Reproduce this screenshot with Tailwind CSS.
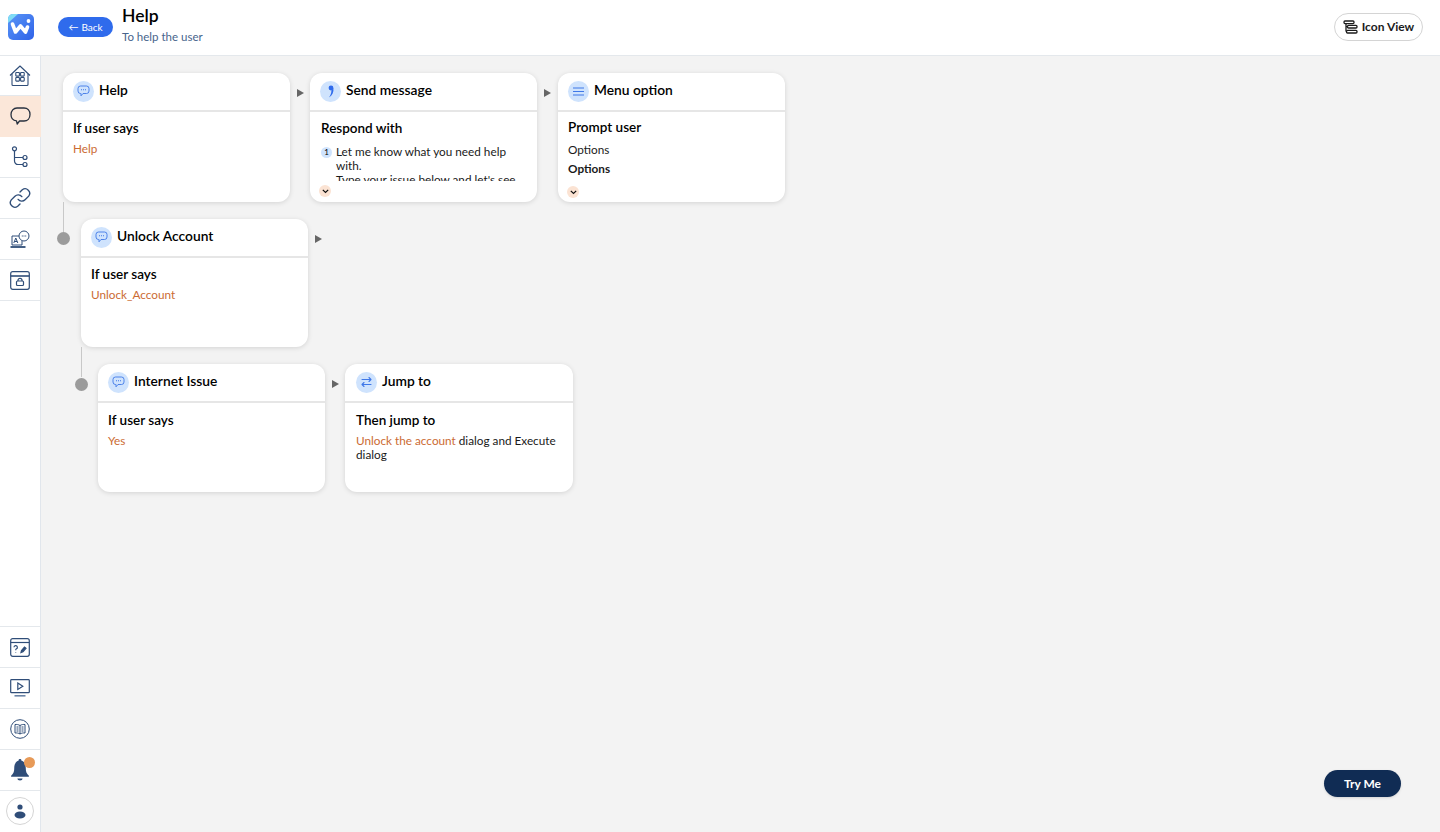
<!DOCTYPE html>
<html>
<head>
<meta charset="utf-8">
<script src="https://cdn.jsdelivr.net/npm/@tailwindcss/browser@4"></script>
</head>
<body class="font-['Lato',sans-serif] text-black bg-[#f3f3f3]">
<div class="relative w-[1440px] h-[832px] overflow-hidden flex flex-col">
  <header class="h-[56px] shrink-0 bg-white border-b border-[#e4e8ec] flex items-start">
    <div class="w-[41px] h-[55px] flex items-start justify-center pt-[14px] shrink-0">
      <svg width="26" height="26" viewBox="0 0 26 26"><defs><linearGradient id="lg" x1="0" y1="0" x2="1" y2="1"><stop offset="0" stop-color="#5a96f7"/><stop offset="1" stop-color="#2f62e8"/></linearGradient></defs><rect width="26" height="26" rx="5" fill="url(#lg)"/><path d="M0 9V5a5 5 0 0 1 5-5h5z" fill="#7fdcf5"/><path d="M4.500 10 7.500 18l5-6 5 6 2-5" fill="none" stroke="#fff" stroke-width="3.600" stroke-linecap="round" stroke-linejoin="round"/><circle cx="20.500" cy="7" r="1.900" fill="#fff"/></svg>
    </div>
    <button class="ml-[17px] mt-[17px] w-[55px] h-[20px] rounded-full bg-[#2f6bec] text-white text-[10px] flex items-center justify-center gap-[3px]"><span>←</span><span>Back</span></button>
    <div class="ml-[9px] mt-[6px]">
      <div class="text-[17.500px] leading-[20px] font-semibold">Help</div>
      <div class="text-[11.500px] leading-[14px] mt-[4px] text-[#47648c]">To help the user</div>
    </div>
    <button class="ml-auto mr-[17px] mt-[13px] w-[89px] h-[28px] rounded-full bg-white border border-[#d4d4d4] flex items-center justify-center gap-[4px] text-[12px] font-bold text-[#1b1b1b]">
      <svg width="15" height="14" viewBox="0 0 15 14" fill="none" stroke="#1b1b1b" stroke-width="1.300"><rect x="1" y="1" width="10" height="2.600" rx="1"/><path d="M3 3.600v3h1.500M3 6.600v5"/><rect x="4.500" y="5.400" width="9.500" height="2.600" rx="1"/><rect x="3.500" y="10.400" width="10.500" height="2.600" rx="1"/></svg>
      Icon View
    </button>
  </header>

  <div class="flex-1 flex min-h-0">
    <nav class="w-[41px] shrink-0 bg-white border-r border-[#e1e6ec] flex flex-col justify-between">
      <div class="flex flex-col">
        <div class="h-[40px] flex items-center justify-center border-b border-[#e4e8ec]">
          <svg width="22" height="22" viewBox="0 0 22 22" fill="none" stroke="#2f4d78" stroke-width="1.100" stroke-linejoin="round"><path d="M1 10.500 11 1l10 9.500"/><path d="M3 9v10.500a1 1 0 0 0 1 1h14a1 1 0 0 0 1-1V9"/><rect x="6.800" y="7.500" width="3.600" height="3.600" rx=".6"/><rect x="11.600" y="7.500" width="3.600" height="3.600" rx=".6"/><rect x="6.800" y="12.500" width="3.600" height="3.600" rx=".6"/><rect x="11.600" y="12.500" width="3.600" height="3.600" rx=".6"/></svg>
        </div>
        <div class="h-[41px] flex items-center justify-center bg-[#fbe7d9] -mr-px">
          <svg width="21" height="19" viewBox="0 0 21 19" fill="none" stroke="#27313f" stroke-width="1.300" stroke-linejoin="round"><path d="M7 1h7c3.500 0 6 2.500 6 6.500S17.500 14 14 14H9.500l-2.300 3-.7-3.200C3 13.500 1 11 1 7.500S3.500 1 7 1z"/></svg>
        </div>
        <div class="h-[41px] flex items-center justify-center border-b border-[#e4e8ec]">
          <svg width="18" height="22" viewBox="0 0 18 22" fill="none" stroke="#2f4d78" stroke-width="1.200"><circle cx="3.500" cy="2.800" r="2"/><circle cx="14" cy="11.500" r="2"/><circle cx="14" cy="18.500" r="2"/><path d="M3.500 4.800V15a3.500 3.500 0 0 0 3.500 3.500h5M3.500 11.500H12"/></svg>
        </div>
        <div class="h-[41px] flex items-center justify-center border-b border-[#e4e8ec]">
          <svg width="22" height="22" viewBox="0 0 24 24" fill="none" stroke="#2f4d78" stroke-width="1.500" stroke-linecap="round"><path d="M10 13.500a5 5 0 0 0 7.500.5l4-4a5 5 0 0 0-7-7l-2.500 2.500"/><path d="M14 10.500a5 5 0 0 0-7.500-.5l-4 4a5 5 0 0 0 7 7l2.500-2.500"/></svg>
        </div>
        <div class="h-[41px] flex items-center justify-center border-b border-[#e4e8ec]">
          <svg width="20" height="19" viewBox="0 0 20 19" fill="none" stroke="#2f4d78" stroke-width="1"><path d="M9 6H2v9h10"/><path d="M.5 17h15" stroke-width="1.800"/><path d="M3.800 13l2-5 2 5M4.500 11.500h2.600" stroke-width="1"/><circle cx="14" cy="6" r="5"/><path d="M11.800 6h1M13.500 6h1M15.200 6h1" stroke-width="1.200"/><path d="M12 15v-4"/></svg>
        </div>
        <div class="h-[41px] flex items-center justify-center border-b border-[#e4e8ec]">
          <svg width="20" height="19" viewBox="0 0 20 19" fill="none" stroke="#2f4d78" stroke-width="1.200"><rect x=".7" y=".7" width="18.600" height="17.600" rx="2"/><path d="M.7 5h18.600" stroke-width="1.600"/><rect x="6.500" y="10" width="7" height="4.500" rx="1"/><path d="M8 10V9.300a2 2 0 0 1 4 0v.7"/></svg>
        </div>
      </div>
      <div class="flex flex-col mb-px">
        <div class="h-[41px] flex items-center justify-center border-t border-[#e4e8ec]">
          <svg width="20" height="19" viewBox="0 0 20 19" fill="none" stroke="#2f4d78" stroke-width="1.200"><rect x=".7" y=".7" width="18.600" height="17.600" rx="2"/><path d="M.7 4.500h18.600"/><path d="M4 9.200a1.700 1.700 0 1 1 2.400 1.600c-.6.300-.7.700-.7 1.400M5.700 14v.6"/><path d="M11 14.500l.5-2 3-3.500 1.500 1.300-3 3.500z" fill="#2f4d78"/></svg>
        </div>
        <div class="h-[41px] flex items-center justify-center border-t border-[#e4e8ec]">
          <svg width="20" height="18" viewBox="0 0 20 18" fill="none" stroke="#2f4d78" stroke-width="1.200"><rect x=".7" y=".7" width="18.600" height="13" rx=".8"/><path d="M7.800 4l5 3.200-5 3.200z"/><path d="M4.500 16.800h11" stroke-width="1.600" stroke="#6a83a6"/></svg>
        </div>
        <div class="h-[41px] flex items-center justify-center border-t border-[#e4e8ec]">
          <svg width="20" height="20" viewBox="0 0 20 20" fill="none" stroke="#2f4d78" stroke-width="1"><circle cx="10" cy="10" r="9.300"/><path d="M10 6.500C8.500 5.500 6.500 5.300 5 5.500v8.500c1.700-.2 3.500 0 5 1 1.500-1 3.300-1.200 5-1V5.500c-1.500-.2-3.500 0-5 1zM10 6.500V15M6.500 8h2M6.500 10h2M6.500 12h2M11.500 8h2M11.500 10h2M11.500 12h2"/></svg>
        </div>
        <div class="relative h-[41px] flex items-center justify-center border-t border-[#e4e8ec]">
          <svg width="20" height="22" viewBox="0 0 18 21" fill="#2f4d78"><path d="M9 0a1.200 1.200 0 0 1 1.200 1.500C13 2.300 14.500 5 14.500 8.500c0 4 1 5.500 3 7.500v1H.5v-1c2-2 3-3.500 3-7.500C3.500 5 5 2.300 7.800 1.500A1.200 1.200 0 0 1 9 0z"/><path d="M6.500 18.500h5a2.500 2 0 0 1-5 0z"/></svg>
          <span class="absolute top-[7px] left-[24px] w-[11px] h-[11px] rounded-full bg-[#e79a58]"></span>
        </div>
        <div class="h-[41px] flex items-center justify-center border-t border-[#e4e8ec]">
          <span class="w-[28px] h-[28px] rounded-full border border-[#d5d5d5] flex items-center justify-center">
            <svg width="12" height="15" viewBox="0 0 12 15" fill="#2f4d78"><circle cx="6" cy="3" r="2.600"/><ellipse cx="6" cy="11" rx="5.500" ry="3.500"/></svg>
          </span>
        </div>
      </div>
    </nav>

    <main class="relative flex-1 pl-[22px] pt-[17px]">
      <div class="flex">
        <section class="w-[227px] h-[129px] rounded-xl bg-white shadow-[0_1px_5px_rgba(0,0,0,0.13)] overflow-hidden flex flex-col">
          <div class="h-[39px] shrink-0 border-b-2 border-[#e6e6e6] flex items-center pl-[10px] gap-[5px] pb-[3px]">
            <span class="w-[21px] h-[21px] mt-[2px] rounded-full bg-[#cfe3fd] flex items-center justify-center"><svg width="13" height="12" viewBox="0 0 13 12" fill="none" stroke="#3f78e8" stroke-width=".9"><path d="M3.500 1h6A2.500 2.500 0 0 1 12 3.500v2.500A2.500 2.500 0 0 1 9.500 8.500H6L4 10.800V8.500h-.5A2.500 2.500 0 0 1 1 6V3.500A2.500 2.500 0 0 1 3.500 1z"/><path d="M4 4.800h1M6 4.800h1M8 4.800h1" stroke-width="1.100"/></svg></span>
            <span class="text-[13.800px] font-semibold">Help</span>
          </div>
          <div class="pl-[10px] pt-[8px]">
            <div class="text-[13.500px] leading-[17px] font-semibold">If user says</div>
            <div class="text-[11.750px] leading-[14px] mt-[5px] text-[#cb6b33]">Help</div>
          </div>
        </section>
        <div class="w-[20px] flex justify-center pt-[16px]"><span class="w-0 h-0 border-y-[4px] border-y-transparent border-l-[7px] border-l-[#666]"></span></div>
        <section class="w-[227px] h-[129px] rounded-xl bg-white shadow-[0_1px_5px_rgba(0,0,0,0.13)] overflow-hidden flex flex-col">
          <div class="h-[39px] shrink-0 border-b-2 border-[#e6e6e6] flex items-center pl-[10px] gap-[5px] pb-[3px]">
            <span class="w-[21px] h-[21px] mt-[2px] rounded-full bg-[#cfe3fd] flex items-center justify-center"><svg width="8" height="13" viewBox="0 0 8 13" fill="#2f6bec"><circle cx="4" cy="3" r="2.400"/><path d="M6.400 3c.5 4-1 7.500-4.500 9.500 1.800-2.500 2.500-4.500 2.500-7z"/></svg></span>
            <span class="text-[13.800px] font-semibold">Send message</span>
          </div>
          <div class="pl-[11px] pr-[10px] pt-[8px]">
            <div class="text-[13.500px] leading-[17px] font-semibold">Respond with</div>
            <div class="flex mt-[8px] h-[36px] overflow-hidden">
              <span class="mt-[2px] w-[11px] h-[11px] rounded-full bg-[#cfe3fd] text-[8px] leading-[11px] text-center shrink-0">1</span>
              <p class="ml-[4px] text-[11.750px] leading-[14px] text-[#1a1a1a]">Let me know what you need help with.<br>Type your issue below and let's see</p>
            </div>
            <span class="mt-[4px] -ml-[2px] w-[12px] h-[12px] rounded-full bg-[#fbe3d3] flex items-center justify-center"><svg width="7" height="5" viewBox="0 0 7 5" fill="none" stroke="#111" stroke-width="1.200"><path d="M.8.8 3.500 3.500 6.200.8"/></svg></span>
          </div>
        </section>
        <div class="w-[21px] flex justify-center pt-[16px]"><span class="w-0 h-0 border-y-[4px] border-y-transparent border-l-[7px] border-l-[#666]"></span></div>
        <section class="w-[227px] h-[129px] rounded-xl bg-white shadow-[0_1px_5px_rgba(0,0,0,0.13)] overflow-hidden flex flex-col">
          <div class="h-[39px] shrink-0 border-b-2 border-[#e6e6e6] flex items-center pl-[10px] gap-[5px] pb-[3px]">
            <span class="w-[21px] h-[21px] mt-[2px] rounded-full bg-[#cfe3fd] flex items-center justify-center"><svg width="11" height="9" viewBox="0 0 11 9" stroke="#3f78e8" stroke-width="1.200"><path d="M0 1h11M0 4.500h11M0 8h11"/></svg></span>
            <span class="text-[13.800px] font-semibold">Menu option</span>
          </div>
          <div class="pl-[10px] pt-[7px]">
            <div class="text-[13.500px] leading-[17px] font-semibold">Prompt user</div>
            <div class="text-[11.750px] leading-[14px] mt-[7px] text-[#1a1a1a]">Options</div>
            <div class="text-[11.750px] leading-[14px] mt-[5px] font-bold text-[#1a1a1a]">Options</div>
            <span class="mt-[10px] -ml-[1px] w-[12px] h-[12px] rounded-full bg-[#fbe3d3] flex items-center justify-center"><svg width="7" height="5" viewBox="0 0 7 5" fill="none" stroke="#111" stroke-width="1.200"><path d="M.8.8 3.500 3.500 6.200.8"/></svg></span>
          </div>
        </section>
      </div>

      <div class="flex ml-[18px] mt-[17px]">
        <section class="w-[227px] h-[128px] rounded-xl bg-white shadow-[0_1px_5px_rgba(0,0,0,0.13)] overflow-hidden flex flex-col">
          <div class="h-[39px] shrink-0 border-b-2 border-[#e6e6e6] flex items-center pl-[10px] gap-[5px] pb-[3px]">
            <span class="w-[21px] h-[21px] mt-[2px] rounded-full bg-[#cfe3fd] flex items-center justify-center"><svg width="13" height="12" viewBox="0 0 13 12" fill="none" stroke="#3f78e8" stroke-width=".9"><path d="M3.500 1h6A2.500 2.500 0 0 1 12 3.500v2.500A2.500 2.500 0 0 1 9.500 8.500H6L4 10.800V8.500h-.5A2.500 2.500 0 0 1 1 6V3.500A2.500 2.500 0 0 1 3.500 1z"/><path d="M4 4.800h1M6 4.800h1M8 4.800h1" stroke-width="1.100"/></svg></span>
            <span class="text-[13.800px] font-semibold">Unlock Account</span>
          </div>
          <div class="pl-[10px] pt-[8px]">
            <div class="text-[13.500px] leading-[17px] font-semibold">If user says</div>
            <div class="text-[11.750px] leading-[14px] mt-[5px] text-[#cb6b33]">Unlock_Account</div>
          </div>
        </section>
        <div class="w-[20px] flex justify-center pt-[16px]"><span class="w-0 h-0 border-y-[4px] border-y-transparent border-l-[7px] border-l-[#666]"></span></div>
      </div>

      <div class="flex ml-[35px] mt-[17px]">
        <section class="w-[227px] h-[128px] rounded-xl bg-white shadow-[0_1px_5px_rgba(0,0,0,0.13)] overflow-hidden flex flex-col">
          <div class="h-[39px] shrink-0 border-b-2 border-[#e6e6e6] flex items-center pl-[10px] gap-[5px] pb-[3px]">
            <span class="w-[21px] h-[21px] mt-[2px] rounded-full bg-[#cfe3fd] flex items-center justify-center"><svg width="13" height="12" viewBox="0 0 13 12" fill="none" stroke="#3f78e8" stroke-width=".9"><path d="M3.500 1h6A2.500 2.500 0 0 1 12 3.500v2.500A2.500 2.500 0 0 1 9.500 8.500H6L4 10.800V8.500h-.5A2.500 2.500 0 0 1 1 6V3.500A2.500 2.500 0 0 1 3.500 1z"/><path d="M4 4.800h1M6 4.800h1M8 4.800h1" stroke-width="1.100"/></svg></span>
            <span class="text-[13.800px] font-semibold">Internet Issue</span>
          </div>
          <div class="pl-[10px] pt-[9px]">
            <div class="text-[13.500px] leading-[17px] font-semibold">If user says</div>
            <div class="text-[11.750px] leading-[14px] mt-[5px] text-[#cb6b33]">Yes</div>
          </div>
        </section>
        <div class="w-[20px] flex justify-center pt-[16px]"><span class="w-0 h-0 border-y-[4px] border-y-transparent border-l-[7px] border-l-[#666]"></span></div>
        <section class="w-[228px] h-[128px] rounded-xl bg-white shadow-[0_1px_5px_rgba(0,0,0,0.13)] overflow-hidden flex flex-col">
          <div class="h-[39px] shrink-0 border-b-2 border-[#e6e6e6] flex items-center pl-[11px] gap-[5px] pb-[3px]">
            <span class="w-[21px] h-[21px] mt-[2px] rounded-full bg-[#cfe3fd] flex items-center justify-center"><svg width="13" height="12" viewBox="0 0 13 12" fill="none" stroke="#3f78e8" stroke-width="1.100" stroke-linecap="round" stroke-linejoin="round"><path d="M2 3.500h9M9 1.500l2 2-2 2M11 8.500H2M4 6.500l-2 2 2 2"/></svg></span>
            <span class="text-[13.800px] font-semibold">Jump to</span>
          </div>
          <div class="pl-[11px] pr-[10px] pt-[9px]">
            <div class="text-[13.500px] leading-[17px] font-semibold">Then jump to</div>
            <div class="text-[11.750px] leading-[14px] mt-[5px] text-[#1a1a1a]"><span class="text-[#cb6b33]">Unlock the account</span> dialog and Execute dialog</div>
          </div>
        </section>
      </div>

      <span class="absolute left-[22px] top-[146px] w-px h-[30px] bg-[#c8c8c8]"></span>
      <span class="absolute left-[16px] top-[176px] w-[13px] h-[13px] rounded-full bg-[#9b9b9b]"></span>
      <span class="absolute left-[40px] top-[291px] w-px h-[30px] bg-[#c8c8c8]"></span>
      <span class="absolute left-[34px] top-[322px] w-[13px] h-[13px] rounded-full bg-[#9b9b9b]"></span>

      <button class="absolute right-[39px] bottom-[35px] w-[77px] h-[27px] rounded-full bg-[#102c54] text-white text-[12px] font-bold shadow-sm">Try Me</button>
    </main>
  </div>
</div>
</body>
</html>
